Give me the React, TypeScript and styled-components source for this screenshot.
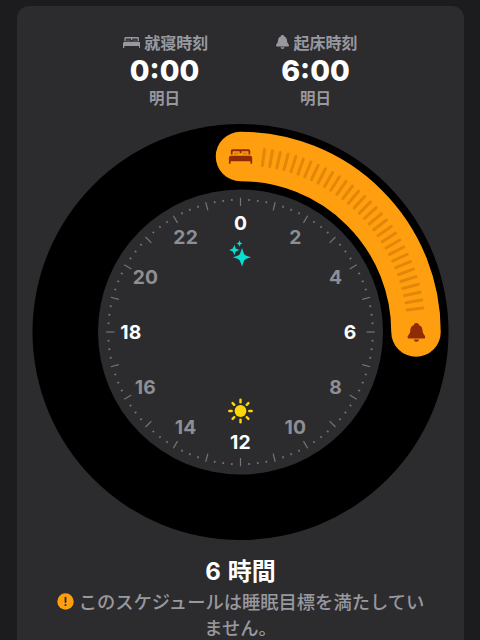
import React from "react";
import styled, { createGlobalStyle } from "styled-components";

const GlobalStyle = createGlobalStyle`
  html, body { margin: 0; background: #1c1c1e; }
  body { height: 640px; overflow: hidden; font-family: Inter, "Noto Sans CJK JP", sans-serif; }
`;

const Screen = styled.main`
  height: 640px;
  box-sizing: border-box;
  padding: 6px 16px 0 17px;
  overflow: hidden;
  background: #1c1c1e;
`;

const Card = styled.section`
  height: 660px;
  border-radius: 12px;
  background: #2c2c2e;
  display: flex;
  flex-direction: column;
`;

const Times = styled.header`
  height: 118px;
  box-sizing: border-box;
  padding: 24px 0 0 72px;
  display: grid;
  grid-template-columns: 151px 151px;
`;

const TimeBlock = styled.div`
  display: flex;
  flex-direction: column;
  align-items: center;
  white-space: nowrap;
`;

const Label = styled.div<{ $gap: number; $shift: number }>`
  display: flex;
  align-items: center;
  gap: ${(p) => p.$gap}px;
  margin-left: ${(p) => p.$shift}px;
  height: 24px;
  font: 700 16px/24px "Noto Sans CJK JP", sans-serif;
  color: #98989f;
`;

const Time = styled.div`
  height: 31px;
  padding-top: 1px;
  box-sizing: border-box;
  font: 800 28.6px/32px Inter, sans-serif;
  color: #fff;
`;

const Day = styled.div`
  height: 24px;
  font: 700 15.5px/24px "Noto Sans CJK JP", sans-serif;
  color: #98989f;
`;

const Dial = styled.svg`
  display: block;
  flex: none;
  width: 447px;
  height: 418px;
`;

const Numeral = styled.text<{ $major: boolean }>`
  font: 700 19.3px Inter, sans-serif;
  letter-spacing: 0.2px;
  text-anchor: middle;
  fill: ${(p) => (p.$major ? "#fff" : "#8e8e93")};
`;

const Duration = styled.h1`
  margin: 15px 0 0;
  height: 30px;
  text-align: center;
  font: 700 24px/30px Inter, "Noto Sans CJK JP", sans-serif;
  word-spacing: 1px;
  color: #fff;
`;

const Notice = styled.p`
  margin: 1px 0 0;
  text-align: center;
  font: 500 18.3px/26px "Noto Sans CJK JP", sans-serif;
  color: #98989f;
`;

const NoticeLine = styled.span`
  display: flex;
  justify-content: center;
  align-items: center;
  gap: 5px;
  height: 26px;
  white-space: nowrap;
`;

const CX = 240.5;
const CY = 332;

const polar = (deg: number, r: number) => {
  const a = (deg * Math.PI) / 180;
  return { x: CX + r * Math.sin(a), y: CY - r * Math.cos(a) };
};

type RayProps = { deg: number; from: number; to: number };

const Ray = ({ deg, from, to }: RayProps) => {
  const a = polar(deg, from);
  const b = polar(deg, to);
  return <line x1={a.x} y1={a.y} x2={b.x} y2={b.y} />;
};

const BedShape = () => (
  <>
    <path d="M2 5.4V1.6Q2 0 3.6 0H20.4Q22 0 22 1.6V5.4H20.2V2.7Q20.2 2 19.5 2H12.9V4H11.1V2H4.5Q3.8 2 3.8 2.7V5.4Z" />
    <path d="M5 3.4H10V5.4H5ZM14 3.4H19V5.4H14Z" opacity=".3" />
    <path d="M2.2 6.6H21.8Q24 6.6 24 8.8V15H22.2V12.4H1.8V15H0V8.8Q0 6.6 2.2 6.6Z" />
  </>
);

const BellShape = () => (
  <>
    <path d="M9 0C10.6 0 11.4 1 11.6 2.1C14.3 3.1 15.2 5.5 15.3 8.2C15.4 11.4 18 12.5 18 14.5Q18 15.7 16.8 15.7H1.2Q0 15.7 0 14.5C0 12.5 2.6 11.4 2.7 8.2C2.8 5.5 3.7 3.1 6.4 2.1C6.6 1 7.4 0 9 0Z" />
    <path d="M6.2 16.9H11.8Q11.2 19.2 9 19.2Q6.8 19.2 6.2 16.9Z" />
  </>
);

const star = (x: number, y: number, r: number) => {
  const k = r * 0.29;
  return `M${x} ${y - r}Q${x + k * 0.7} ${y - k * 1.2} ${x + k} ${y - k}Q${x + k * 1.2} ${y - k * 0.7} ${x + r} ${y}Q${x + k * 1.2} ${y + k * 0.7} ${x + k} ${y + k}Q${x + k * 0.7} ${y + k * 1.2} ${x} ${y + r}Q${x - k * 0.7} ${y + k * 1.2} ${x - k} ${y + k}Q${x - k * 1.2} ${y + k * 0.7} ${x - r} ${y}Q${x - k * 1.2} ${y - k * 0.7} ${x - k} ${y - k}Q${x - k * 0.7} ${y - k * 1.2} ${x} ${y - r}Z`;
};

const SleepDial = () => (
  <Dial viewBox="17 124 447 418">
    <circle cx={CX} cy={CY} r="208" fill="#000" />
    <circle cx={CX} cy={CY} r="142.5" fill="#2c2c2e" />
    <g stroke="#74747a">
      {Array.from({ length: 96 }, (_, i) => (
        <g key={i} strokeWidth={i % 4 === 0 ? 1.2 : 1.6}>
          <Ray deg={i * 3.75} from={i % 4 === 0 ? 126 : 131.3} to={i % 4 === 0 ? 134.3 : 133.3} />
        </g>
      ))}
    </g>
    <path d="M240.5 156.5A175.5 175.5 0 0 1 416 332" fill="none" stroke="#ff9f0f" strokeWidth="49.5" strokeLinecap="round" />
    <g stroke="#e28709" strokeWidth="3" strokeLinecap="round">
      {Array.from({ length: 31 }, (_, i) => (
        <Ray key={i} deg={7.5 + i * 2.5} from={168} to={184} />
      ))}
    </g>
    <g transform="translate(228.9 149.3) scale(.97)" fill="#8f2b05">
      <BedShape />
    </g>
    <g transform="translate(407.6 323) scale(.98)" fill="#8f2b05">
      <BellShape />
    </g>
    {Array.from({ length: 12 }, (_, i) => {
      const p = polar(i * 30, 109.7);
      return (
        <Numeral key={i} x={p.x} y={p.y + 7.3} $major={i % 3 === 0}>
          {i * 2}
        </Numeral>
      );
    })}
    <path fill="#08ded6" d={star(242, 257.3, 9.2) + star(234.3, 250, 5.2) + star(239.5, 243.5, 3.3)} />
    <g stroke="#ffd60a" strokeWidth="2.4" strokeLinecap="round">
      <circle cx="240.5" cy="411" r="5.9" fill="#ffd60a" stroke="none" />
      {Array.from({ length: 8 }, (_, i) => (
        <line key={i} x1="240.5" y1="402.2" x2="240.5" y2="399.8" transform={`rotate(${i * 45} 240.5 411)`} />
      ))}
    </g>
  </Dial>
);

const App = () => (
  <>
    <GlobalStyle />
    <Screen>
      <Card>
        <Times>
          <TimeBlock>
            <Label $gap={4} $shift={2}>
              <svg width="17.4" height="11" viewBox="0 0 24 15" fill="#98989f">
                <BedShape />
              </svg>
              就寝時刻
            </Label>
            <Time>0:00</Time>
            <Day>明日</Day>
          </TimeBlock>
          <TimeBlock>
            <Label $gap={4} $shift={3}>
              <svg width="13" height="14" viewBox="0 0 18 19.2" fill="#98989f">
                <BellShape />
              </svg>
              起床時刻
            </Label>
            <Time>6:00</Time>
            <Day>明日</Day>
          </TimeBlock>
        </Times>
        <SleepDial />
        <Duration>6 時間</Duration>
        <Notice>
          <NoticeLine>
            <svg width="17" height="17" viewBox="0 0 17 17">
              <circle cx="8.5" cy="8.5" r="8.2" fill="#ff9f0f" />
              <path d="M8.5 4.6V9" stroke="#2c2c2e" strokeWidth="1.8" strokeLinecap="round" />
              <circle cx="8.5" cy="12" r="1.1" fill="#2c2c2e" />
            </svg>
            このスケジュールは睡眠目標を満たしてい
          </NoticeLine>
          <NoticeLine>ません。</NoticeLine>
        </Notice>
      </Card>
    </Screen>
  </>
);

export default App;
